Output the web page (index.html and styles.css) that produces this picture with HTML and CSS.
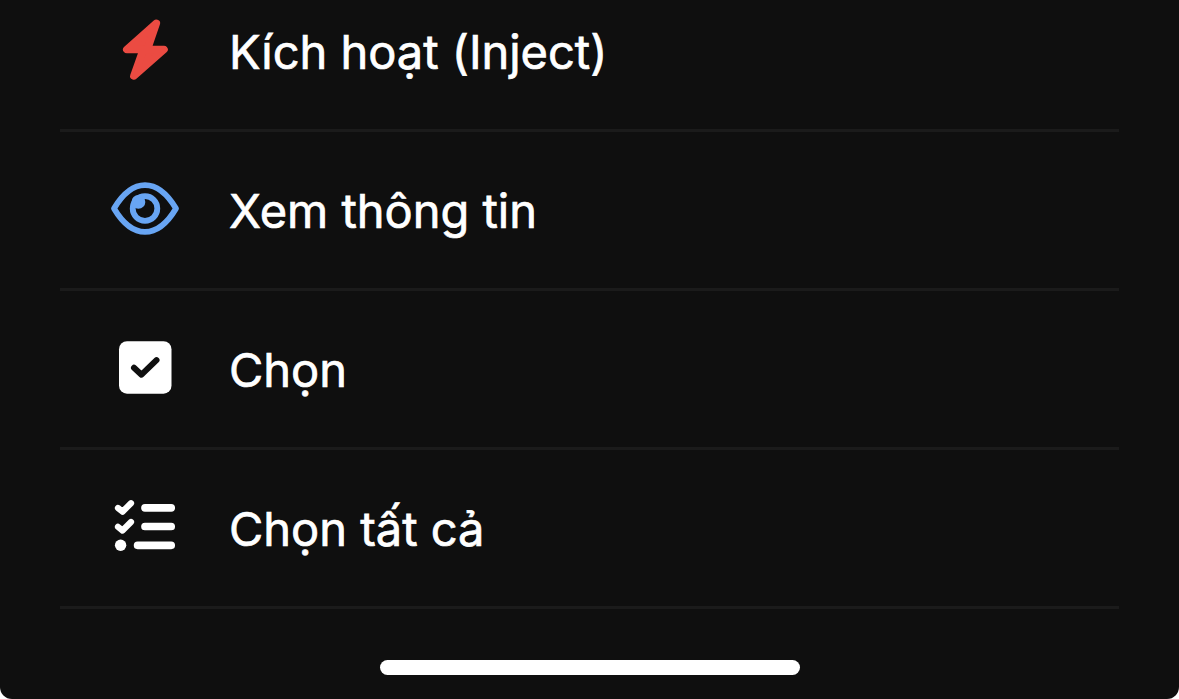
FILE: index.html
```
<!DOCTYPE html>
<html lang="vi">

<head>
    <meta charset="UTF-8">
    <meta name="viewport" content="width=device-width, initial-scale=1.0">
    <title>Menu</title>
    <link rel="stylesheet" href="styles.css">
</head>

<body>
    <div class="sheet">
        <ul class="menu">
            <li class="menu-item first">
                <svg class="icon red" viewBox="0 0 100 100">
                    <path d="M56.3 22.3L26.8 48.5H43.3L33.9 75L64 48.5H47.3Z" fill="currentColor" stroke="currentColor" stroke-width="7.6" stroke-linejoin="round"/>
                </svg>
                <span class="label">Kích hoạt (Inject)</span>
            </li>
            <li class="menu-item">
                <svg class="icon blue" viewBox="0 0 100 100">
                    <path d="M14 48.5C22 35 32 25.1 45 25.1S68 35 76 48.5C68 62 58 71.9 45 71.9S22 62 14 48.5Z" fill="none" stroke="currentColor" stroke-width="5.8" stroke-linejoin="round"/>
                    <circle cx="45" cy="48.5" r="12.3" fill="none" stroke="currentColor" stroke-width="5.8"/>
                    <circle cx="38.4" cy="41.9" r="6.9" fill="currentColor"/>
                </svg>
                <span class="label">Xem thông tin</span>
            </li>
            <li class="menu-item">
                <svg class="icon" viewBox="0 0 100 100">
                    <rect x="19" y="22.2" width="52.5" height="52.5" rx="8" fill="currentColor"/>
                    <path class="tick" d="M34 48.7L41.5 55.7L56.5 41.2"/>
                </svg>
                <span class="label">Chọn</span>
            </li>
            <li class="menu-item">
                <svg class="icon" viewBox="0 0 100 100">
                    <g fill="none" stroke="currentColor" stroke-linecap="round" stroke-linejoin="round">
                        <path d="M18 30L22.5 33.7L31 25.2M18 48.8L22.5 52.5L31 44" stroke-width="6.2"/>
                        <path d="M45 29.8H71.2M45 48.5H71.2M37.6 67.3H71.2" stroke-width="7.7"/>
                    </g>
                    <circle cx="20.6" cy="67.3" r="5.7" fill="currentColor"/>
                </svg>
                <span class="label">Chọn tất cả</span>
            </li>
        </ul>
        <div class="home-bar"></div>
    </div>
</body>

</html>
```
FILE: styles.css
```
body {
    margin: 0;
    background-color: #fff;
    font-family: "Inter", "Liberation Sans", sans-serif;
}

.sheet {
    box-sizing: border-box;
    height: 699px;
    overflow: hidden;
    background-color: #0f0f0f;
    border-radius: 0 0 12px 12px;
    color: #fff;
}

.menu {
    list-style: none;
    margin: 0 60px;
    padding: 0;
}

.menu-item {
    display: flex;
    align-items: center;
    height: 156px;
    padding-left: 40px;
    border-bottom: 3px solid #1b1b1b;
}

/* the top row is scrolled partly out of view */
.menu-item.first {
    margin-top: -27px;
}

.icon {
    width: 100px;
    height: 100px;
    margin-right: 29px;
    flex-shrink: 0;
}

.red {
    color: #eb4b42;
}

.blue {
    color: #68a5f3;
}

.tick {
    fill: none;
    stroke: #0f0f0f;
    stroke-width: 6;
    stroke-linecap: round;
    stroke-linejoin: round;
}

.label {
    font-size: 47px;
    line-height: 58px;
    font-weight: 400;
    letter-spacing: -0.02px;
    -webkit-text-stroke: 0.7px #fff;
    padding-top: 2px;
}

.home-bar {
    width: 420px;
    height: 15px;
    margin: 51px auto 0;
    border-radius: 8px;
    background-color: #fff;
}
```
